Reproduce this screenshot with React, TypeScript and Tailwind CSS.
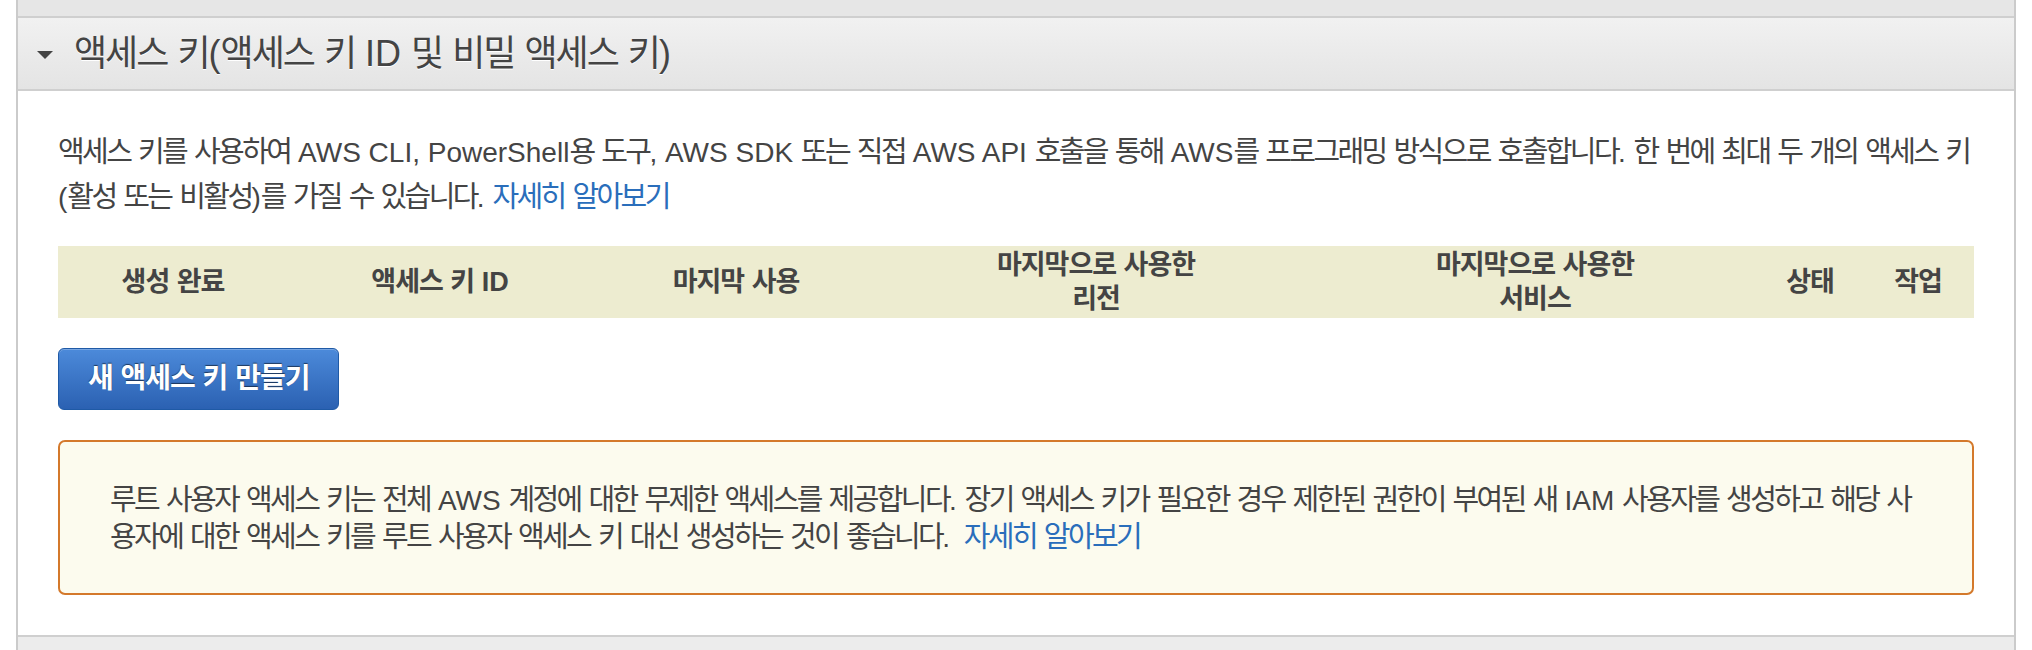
import type { ReactNode } from "react";

// Hangul runs get their own size/tracking so the CJK fallback font sits at the reference's width
function Ko({ children, t }: { children: string; t: string }) {
  const parts = children.split(/([\uAC00-\uD7A3]+)/);
  return (
    <>
      {parts.map((p, i) =>
        i % 2 === 1 ? (
          <span key={i} className={t}>
            {p}
          </span>
        ) : (
          p
        )
      )}
    </>
  );
}

function Th({ children }: { children: ReactNode }) {
  return (
    <div className="flex items-center justify-center text-center">
      <span>{children}</span>
    </div>
  );
}

export default function App() {
  return (
    <div className="w-[2032px] h-[650px] overflow-hidden bg-white font-['Liberation_Sans','Noto_Sans_CJK_KR',sans-serif] text-[#444]">
      <div className="ml-[16px] w-[2000px] h-full flex flex-col border-x-2 border-[#cbcbcb]">
        {/* previous section, collapsed */}
        <div className="h-[18px] shrink-0 bg-[#e6e6e6] border-b-2 border-[#cfcfcf]" />

        {/* section header */}
        <div className="h-[73px] shrink-0 flex items-center gap-[21px] pl-[19px] bg-linear-to-b from-[#f1f1f1] to-[#e4e4e4] border-b-2 border-[#cfcfcf]">
          <svg width="16" height="8" viewBox="0 0 16 8" className="mt-[2px]">
            <polygon points="0,0 16,0 8,8" fill="#444" />
          </svg>
          <h2 className="text-[36px] leading-[40px] [text-shadow:0_1px_0_#fff]">
            <Ko t="tracking-[-2px]">액세스 키(액세스 키 ID 및 비밀 액세스 키)</Ko>
          </h2>
        </div>

        {/* body */}
        <div className="px-10 pt-[39px] pb-[40px] border-b-2 border-[#cfcfcf] shrink-0">
          <p className="-mr-[12px] text-[28px] leading-[44px]">
            <Ko t="text-[29px] tracking-[-2.6px]">
              액세스 키를 사용하여 AWS CLI, PowerShell용 도구, AWS SDK 또는 직접 AWS API 호출을 통해 AWS를 프로그래밍 방식으로 호출합니다. 한 번에 최대 두 개의 액세스 키 (활성 또는 비활성)를 가질 수 있습니다.
            </Ko>{" "}
            <a className="text-[#2a6ebb]">
              <Ko t="text-[29px] tracking-[-2.6px]">자세히 알아보기</Ko>
            </a>
          </p>

          <div className="mt-[26px] h-[72px] grid grid-cols-[230px_304px_288px_432px_446px_104px_112px] bg-[#edecd0] text-[27px] leading-[34px] font-bold">
            <Th>
              <Ko t="tracking-[-1px]">생성 완료</Ko>
            </Th>
            <Th>
              <Ko t="tracking-[-1px]">액세스 키 ID</Ko>
            </Th>
            <Th>
              <Ko t="tracking-[-1px]">마지막 사용</Ko>
            </Th>
            <Th>
              <Ko t="tracking-[-1px]">마지막으로 사용한</Ko>
              <br />
              <Ko t="tracking-[-1px]">리전</Ko>
            </Th>
            <Th>
              <Ko t="tracking-[-1px]">마지막으로 사용한</Ko>
              <br />
              <Ko t="tracking-[-1px]">서비스</Ko>
            </Th>
            <Th>
              <Ko t="tracking-[-1px]">상태</Ko>
            </Th>
            <Th>
              <Ko t="tracking-[-1px]">작업</Ko>
            </Th>
          </div>

          <button className="mt-[30px] h-[62px] px-[29px] rounded-[6px] border border-[#1f5aa6] bg-linear-to-b from-[#4c8ada] to-[#2b61b2] text-white text-[28px] font-bold [text-shadow:0_-1px_1px_rgba(0,0,0,0.55)] shadow-[inset_0_1px_0_rgba(255,255,255,0.25)]">
            <Ko t="tracking-[-1px]">새 액세스 키 만들기</Ko>
          </button>

          <div className="mt-[30px] h-[155px] rounded-[7px] border-2 border-[#d4792b] bg-[#fcfbee] pl-[50px] pr-[42px] pt-[40px] text-[28px] leading-[37px]">
            <Ko t="text-[29px] tracking-[-2.6px]">
              루트 사용자 액세스 키는 전체 AWS 계정에 대한 무제한 액세스를 제공합니다. 장기 액세스 키가 필요한 경우 제한된 권한이 부여된 새 IAM 사용자를 생성하고 해당 사용자에 대한 액세스 키를 루트 사용자 액세스 키 대신 생성하는 것이 좋습니다.
            </Ko>{" "}
            <a className="ml-[6px] text-[#2a6ebb]">
              <Ko t="text-[29px] tracking-[-2.6px]">자세히 알아보기</Ko>
            </a>
          </div>
        </div>

        {/* next section, collapsed */}
        <div className="flex-1 bg-[#ececec]" />
      </div>
    </div>
  );
}
